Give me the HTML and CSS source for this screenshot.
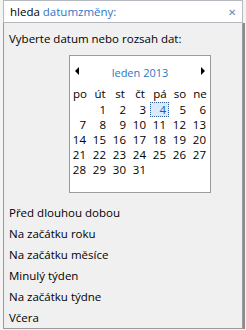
FILE: index.html
```html
<!DOCTYPE html>
<html lang="cs">
<head>
  <meta charset="UTF-8">
  <title>hleda datumzměny</title>
  <link rel="stylesheet" href="styles.css">
</head>
<body>
  <!-- pole hledání -->
  <div class="search">
    <span class="query">hleda <span class="keyword">datumzměny:</span></span>
    <span class="close">&#x2715;</span>
  </div>

  <!-- rozbalovací panel s kalendářem -->
  <div class="panel">
    <div class="prompt">Vyberte datum nebo rozsah dat:</div>

    <div class="calendar">
      <div class="cal-head">
        <span class="arrow arrow-left"></span>
        <span class="month">leden 2013</span>
        <span class="arrow arrow-right"></span>
      </div>
      <div class="cal-grid">
        <div class="dow">po</div><div class="dow">út</div><div class="dow">st</div><div class="dow">čt</div><div class="dow">pá</div><div class="dow">so</div><div class="dow">ne</div>
        <div></div><div class="day">1</div><div class="day">2</div><div class="day">3</div><div class="day today">4</div><div class="day">5</div><div class="day">6</div>
        <div class="day">7</div><div class="day">8</div><div class="day">9</div><div class="day">10</div><div class="day">11</div><div class="day">12</div><div class="day">13</div>
        <div class="day">14</div><div class="day">15</div><div class="day">16</div><div class="day">17</div><div class="day">18</div><div class="day">19</div><div class="day">20</div>
        <div class="day">21</div><div class="day">22</div><div class="day">23</div><div class="day">24</div><div class="day">25</div><div class="day">26</div><div class="day">27</div>
        <div class="day">28</div><div class="day">29</div><div class="day">30</div><div class="day">31</div>
      </div>
    </div>

    <ul class="ranges">
      <li>Před dlouhou dobou</li>
      <li>Na začátku roku</li>
      <li>Na začátku měsíce</li>
      <li>Minulý týden</li>
      <li>Na začátku týdne</li>
      <li>Včera</li>
    </ul>
  </div>
</body>
</html>
```

FILE: styles.css
```css
body {
  margin: 0;
  width: 246px;
  height: 330px;
  overflow: hidden;
  background-color: #f4f4f4;
  font-family: "Open Sans", "Noto Sans", sans-serif;
  font-size: 11px;
  color: #000;
}
.search {
  margin-left: 3px;
  width: 240px;
  height: 23px;
  box-sizing: border-box;
  border: 1px solid #b5b8bf;
  background: #fff;
  display: flex;
  align-items: center;
  justify-content: space-between;
  padding: 0 6px 0 6px;
  line-height: 15px;
  font-size: 11.5px;
}
.keyword {
  color: #2f76c6;
}
.close {
  color: #7388a0;
  font-size: 10px;
  margin-top: 2px;
}
.panel {
  margin-left: 3px;
  width: 240px;
  height: 306px;
  box-sizing: border-box;
  border: 1px solid #9a9a9a;
  border-top: none;
  background-color: #f0f0f0;
  padding: 8px 0 0 5px;
  box-shadow: 2px 0 0 #8c8c8c;
}
.prompt {
  line-height: 16px;
  font-size: 11.5px;
}
/* kalendář */
.calendar {
  margin: 8px 0 0 60px;
  width: 142px;
  box-sizing: border-box;
  border: 1px solid #9c9c9c;
  background: #fff;
}
.cal-head {
  height: 30px;
  display: flex;
  align-items: center;
  justify-content: space-between;
  padding: 0 5px;
}
.month {
  color: #2f76c6;
  margin-top: 2px;
}
.arrow {
  width: 0;
  height: 0;
  border-top: 4px solid transparent;
  border-bottom: 4px solid transparent;
}
.arrow-left {
  border-right: 4px solid #000;
}
.arrow-right {
  border-left: 4px solid #000;
}
.cal-grid {
  display: grid;
  grid-template-columns: repeat(7, 20px);
  grid-template-rows: 16px repeat(6, 15px);
  line-height: 15px;
  font-size: 11.5px;
}
.dow {
  text-align: center;
}
.day {
  text-align: right;
  padding-right: 4px;
}
.today {
  color: #1a5fb4;
  background: #dcebfb;
  border: 1px dotted #2e5f9e;
  margin: 0 1px 0 0;
  padding-right: 2px;
  line-height: 13px;
}
/* volby rozsahu */
.ranges {
  list-style: none;
  margin: 9px 0 0 0;
  padding: 0;
}
.ranges li {
  line-height: 21px;
  font-size: 11.5px;
}
```
